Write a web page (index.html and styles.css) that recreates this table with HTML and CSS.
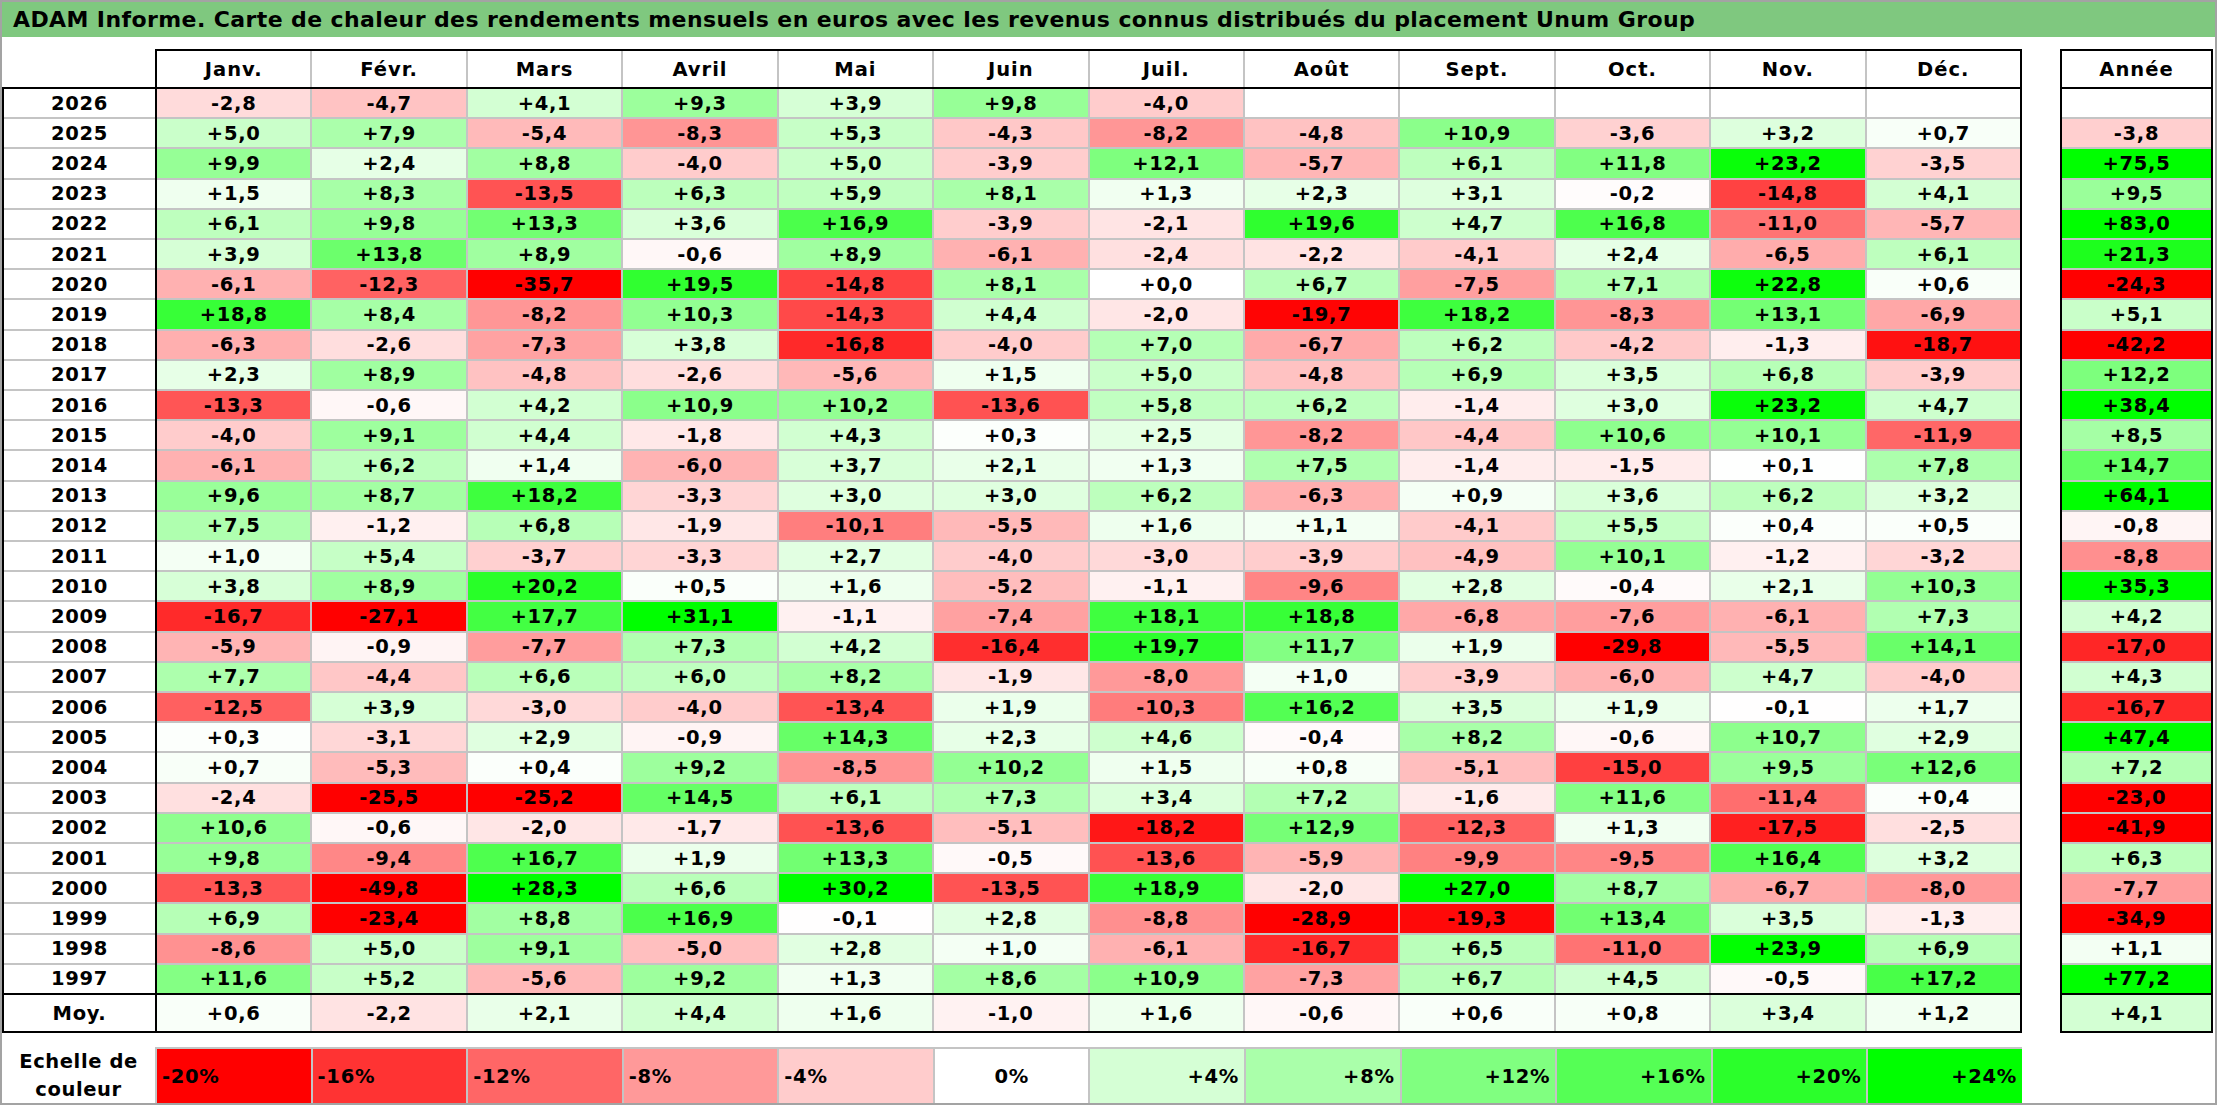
FILE: index.html
```html
<!DOCTYPE html>
<html lang="fr">
<head>
<meta charset="utf-8">
<title>ADAM Informe – Unum Group</title>
<link rel="stylesheet" href="styles.css">
</head>
<body>
<div class="page">
  <div class="title">ADAM Informe. Carte de chaleur des rendements mensuels en euros avec les revenus connus distribués du placement Unum Group</div>
  <div class="main">
    <div class="left">
      <div class="hdr">
        <div class="corner"></div>
        <div class="mhead">
          <div class="h">Janv.</div><div class="h">Févr.</div><div class="h">Mars</div><div class="h">Avril</div><div class="h">Mai</div><div class="h">Juin</div><div class="h">Juil.</div><div class="h">Août</div><div class="h">Sept.</div><div class="h">Oct.</div><div class="h">Nov.</div><div class="h">Déc.</div>
        </div>
      </div>
      <div class="body">
        <div class="years">
          <div class="y">2026</div><div class="y">2025</div><div class="y">2024</div><div class="y">2023</div><div class="y">2022</div><div class="y">2021</div><div class="y">2020</div><div class="y">2019</div><div class="y">2018</div><div class="y">2017</div><div class="y">2016</div><div class="y">2015</div><div class="y">2014</div><div class="y">2013</div><div class="y">2012</div><div class="y">2011</div><div class="y">2010</div><div class="y">2009</div><div class="y">2008</div><div class="y">2007</div><div class="y">2006</div><div class="y">2005</div><div class="y">2004</div><div class="y">2003</div><div class="y">2002</div><div class="y">2001</div><div class="y">2000</div><div class="y">1999</div><div class="y">1998</div><div class="y">1997</div>
        </div>
        <div class="cells">
          <div class="c" style="--v:-2.8">-2,8</div><div class="c" style="--v:-4.7">-4,7</div><div class="c" style="--v:4.1">+4,1</div><div class="c" style="--v:9.3">+9,3</div><div class="c" style="--v:3.9">+3,9</div><div class="c" style="--v:9.8">+9,8</div><div class="c" style="--v:-4.0">-4,0</div><div class="c"></div><div class="c"></div><div class="c"></div><div class="c"></div><div class="c"></div>
          <div class="c" style="--v:5.0">+5,0</div><div class="c" style="--v:7.9">+7,9</div><div class="c" style="--v:-5.4">-5,4</div><div class="c" style="--v:-8.3">-8,3</div><div class="c" style="--v:5.3">+5,3</div><div class="c" style="--v:-4.3">-4,3</div><div class="c" style="--v:-8.2">-8,2</div><div class="c" style="--v:-4.8">-4,8</div><div class="c" style="--v:10.9">+10,9</div><div class="c" style="--v:-3.6">-3,6</div><div class="c" style="--v:3.2">+3,2</div><div class="c" style="--v:0.7">+0,7</div>
          <div class="c" style="--v:9.9">+9,9</div><div class="c" style="--v:2.4">+2,4</div><div class="c" style="--v:8.8">+8,8</div><div class="c" style="--v:-4.0">-4,0</div><div class="c" style="--v:5.0">+5,0</div><div class="c" style="--v:-3.9">-3,9</div><div class="c" style="--v:12.1">+12,1</div><div class="c" style="--v:-5.7">-5,7</div><div class="c" style="--v:6.1">+6,1</div><div class="c" style="--v:11.8">+11,8</div><div class="c" style="--v:23.2">+23,2</div><div class="c" style="--v:-3.5">-3,5</div>
          <div class="c" style="--v:1.5">+1,5</div><div class="c" style="--v:8.3">+8,3</div><div class="c" style="--v:-13.5">-13,5</div><div class="c" style="--v:6.3">+6,3</div><div class="c" style="--v:5.9">+5,9</div><div class="c" style="--v:8.1">+8,1</div><div class="c" style="--v:1.3">+1,3</div><div class="c" style="--v:2.3">+2,3</div><div class="c" style="--v:3.1">+3,1</div><div class="c" style="--v:-0.2">-0,2</div><div class="c" style="--v:-14.8">-14,8</div><div class="c" style="--v:4.1">+4,1</div>
          <div class="c" style="--v:6.1">+6,1</div><div class="c" style="--v:9.8">+9,8</div><div class="c" style="--v:13.3">+13,3</div><div class="c" style="--v:3.6">+3,6</div><div class="c" style="--v:16.9">+16,9</div><div class="c" style="--v:-3.9">-3,9</div><div class="c" style="--v:-2.1">-2,1</div><div class="c" style="--v:19.6">+19,6</div><div class="c" style="--v:4.7">+4,7</div><div class="c" style="--v:16.8">+16,8</div><div class="c" style="--v:-11.0">-11,0</div><div class="c" style="--v:-5.7">-5,7</div>
          <div class="c" style="--v:3.9">+3,9</div><div class="c" style="--v:13.8">+13,8</div><div class="c" style="--v:8.9">+8,9</div><div class="c" style="--v:-0.6">-0,6</div><div class="c" style="--v:8.9">+8,9</div><div class="c" style="--v:-6.1">-6,1</div><div class="c" style="--v:-2.4">-2,4</div><div class="c" style="--v:-2.2">-2,2</div><div class="c" style="--v:-4.1">-4,1</div><div class="c" style="--v:2.4">+2,4</div><div class="c" style="--v:-6.5">-6,5</div><div class="c" style="--v:6.1">+6,1</div>
          <div class="c" style="--v:-6.1">-6,1</div><div class="c" style="--v:-12.3">-12,3</div><div class="c" style="--v:-35.7">-35,7</div><div class="c" style="--v:19.5">+19,5</div><div class="c" style="--v:-14.8">-14,8</div><div class="c" style="--v:8.1">+8,1</div><div class="c" style="--v:0">+0,0</div><div class="c" style="--v:6.7">+6,7</div><div class="c" style="--v:-7.5">-7,5</div><div class="c" style="--v:7.1">+7,1</div><div class="c" style="--v:22.8">+22,8</div><div class="c" style="--v:0.6">+0,6</div>
          <div class="c" style="--v:18.8">+18,8</div><div class="c" style="--v:8.4">+8,4</div><div class="c" style="--v:-8.2">-8,2</div><div class="c" style="--v:10.3">+10,3</div><div class="c" style="--v:-14.3">-14,3</div><div class="c" style="--v:4.4">+4,4</div><div class="c" style="--v:-2.0">-2,0</div><div class="c" style="--v:-19.7">-19,7</div><div class="c" style="--v:18.2">+18,2</div><div class="c" style="--v:-8.3">-8,3</div><div class="c" style="--v:13.1">+13,1</div><div class="c" style="--v:-6.9">-6,9</div>
          <div class="c" style="--v:-6.3">-6,3</div><div class="c" style="--v:-2.6">-2,6</div><div class="c" style="--v:-7.3">-7,3</div><div class="c" style="--v:3.8">+3,8</div><div class="c" style="--v:-16.8">-16,8</div><div class="c" style="--v:-4.0">-4,0</div><div class="c" style="--v:7.0">+7,0</div><div class="c" style="--v:-6.7">-6,7</div><div class="c" style="--v:6.2">+6,2</div><div class="c" style="--v:-4.2">-4,2</div><div class="c" style="--v:-1.3">-1,3</div><div class="c" style="--v:-18.7">-18,7</div>
          <div class="c" style="--v:2.3">+2,3</div><div class="c" style="--v:8.9">+8,9</div><div class="c" style="--v:-4.8">-4,8</div><div class="c" style="--v:-2.6">-2,6</div><div class="c" style="--v:-5.6">-5,6</div><div class="c" style="--v:1.5">+1,5</div><div class="c" style="--v:5.0">+5,0</div><div class="c" style="--v:-4.8">-4,8</div><div class="c" style="--v:6.9">+6,9</div><div class="c" style="--v:3.5">+3,5</div><div class="c" style="--v:6.8">+6,8</div><div class="c" style="--v:-3.9">-3,9</div>
          <div class="c" style="--v:-13.3">-13,3</div><div class="c" style="--v:-0.6">-0,6</div><div class="c" style="--v:4.2">+4,2</div><div class="c" style="--v:10.9">+10,9</div><div class="c" style="--v:10.2">+10,2</div><div class="c" style="--v:-13.6">-13,6</div><div class="c" style="--v:5.8">+5,8</div><div class="c" style="--v:6.2">+6,2</div><div class="c" style="--v:-1.4">-1,4</div><div class="c" style="--v:3.0">+3,0</div><div class="c" style="--v:23.2">+23,2</div><div class="c" style="--v:4.7">+4,7</div>
          <div class="c" style="--v:-4.0">-4,0</div><div class="c" style="--v:9.1">+9,1</div><div class="c" style="--v:4.4">+4,4</div><div class="c" style="--v:-1.8">-1,8</div><div class="c" style="--v:4.3">+4,3</div><div class="c" style="--v:0.3">+0,3</div><div class="c" style="--v:2.5">+2,5</div><div class="c" style="--v:-8.2">-8,2</div><div class="c" style="--v:-4.4">-4,4</div><div class="c" style="--v:10.6">+10,6</div><div class="c" style="--v:10.1">+10,1</div><div class="c" style="--v:-11.9">-11,9</div>
          <div class="c" style="--v:-6.1">-6,1</div><div class="c" style="--v:6.2">+6,2</div><div class="c" style="--v:1.4">+1,4</div><div class="c" style="--v:-6.0">-6,0</div><div class="c" style="--v:3.7">+3,7</div><div class="c" style="--v:2.1">+2,1</div><div class="c" style="--v:1.3">+1,3</div><div class="c" style="--v:7.5">+7,5</div><div class="c" style="--v:-1.4">-1,4</div><div class="c" style="--v:-1.5">-1,5</div><div class="c" style="--v:0.1">+0,1</div><div class="c" style="--v:7.8">+7,8</div>
          <div class="c" style="--v:9.6">+9,6</div><div class="c" style="--v:8.7">+8,7</div><div class="c" style="--v:18.2">+18,2</div><div class="c" style="--v:-3.3">-3,3</div><div class="c" style="--v:3.0">+3,0</div><div class="c" style="--v:3.0">+3,0</div><div class="c" style="--v:6.2">+6,2</div><div class="c" style="--v:-6.3">-6,3</div><div class="c" style="--v:0.9">+0,9</div><div class="c" style="--v:3.6">+3,6</div><div class="c" style="--v:6.2">+6,2</div><div class="c" style="--v:3.2">+3,2</div>
          <div class="c" style="--v:7.5">+7,5</div><div class="c" style="--v:-1.2">-1,2</div><div class="c" style="--v:6.8">+6,8</div><div class="c" style="--v:-1.9">-1,9</div><div class="c" style="--v:-10.1">-10,1</div><div class="c" style="--v:-5.5">-5,5</div><div class="c" style="--v:1.6">+1,6</div><div class="c" style="--v:1.1">+1,1</div><div class="c" style="--v:-4.1">-4,1</div><div class="c" style="--v:5.5">+5,5</div><div class="c" style="--v:0.4">+0,4</div><div class="c" style="--v:0.5">+0,5</div>
          <div class="c" style="--v:1.0">+1,0</div><div class="c" style="--v:5.4">+5,4</div><div class="c" style="--v:-3.7">-3,7</div><div class="c" style="--v:-3.3">-3,3</div><div class="c" style="--v:2.7">+2,7</div><div class="c" style="--v:-4.0">-4,0</div><div class="c" style="--v:-3.0">-3,0</div><div class="c" style="--v:-3.9">-3,9</div><div class="c" style="--v:-4.9">-4,9</div><div class="c" style="--v:10.1">+10,1</div><div class="c" style="--v:-1.2">-1,2</div><div class="c" style="--v:-3.2">-3,2</div>
          <div class="c" style="--v:3.8">+3,8</div><div class="c" style="--v:8.9">+8,9</div><div class="c" style="--v:20.2">+20,2</div><div class="c" style="--v:0.5">+0,5</div><div class="c" style="--v:1.6">+1,6</div><div class="c" style="--v:-5.2">-5,2</div><div class="c" style="--v:-1.1">-1,1</div><div class="c" style="--v:-9.6">-9,6</div><div class="c" style="--v:2.8">+2,8</div><div class="c" style="--v:-0.4">-0,4</div><div class="c" style="--v:2.1">+2,1</div><div class="c" style="--v:10.3">+10,3</div>
          <div class="c" style="--v:-16.7">-16,7</div><div class="c" style="--v:-27.1">-27,1</div><div class="c" style="--v:17.7">+17,7</div><div class="c" style="--v:31.1">+31,1</div><div class="c" style="--v:-1.1">-1,1</div><div class="c" style="--v:-7.4">-7,4</div><div class="c" style="--v:18.1">+18,1</div><div class="c" style="--v:18.8">+18,8</div><div class="c" style="--v:-6.8">-6,8</div><div class="c" style="--v:-7.6">-7,6</div><div class="c" style="--v:-6.1">-6,1</div><div class="c" style="--v:7.3">+7,3</div>
          <div class="c" style="--v:-5.9">-5,9</div><div class="c" style="--v:-0.9">-0,9</div><div class="c" style="--v:-7.7">-7,7</div><div class="c" style="--v:7.3">+7,3</div><div class="c" style="--v:4.2">+4,2</div><div class="c" style="--v:-16.4">-16,4</div><div class="c" style="--v:19.7">+19,7</div><div class="c" style="--v:11.7">+11,7</div><div class="c" style="--v:1.9">+1,9</div><div class="c" style="--v:-29.8">-29,8</div><div class="c" style="--v:-5.5">-5,5</div><div class="c" style="--v:14.1">+14,1</div>
          <div class="c" style="--v:7.7">+7,7</div><div class="c" style="--v:-4.4">-4,4</div><div class="c" style="--v:6.6">+6,6</div><div class="c" style="--v:6.0">+6,0</div><div class="c" style="--v:8.2">+8,2</div><div class="c" style="--v:-1.9">-1,9</div><div class="c" style="--v:-8.0">-8,0</div><div class="c" style="--v:1.0">+1,0</div><div class="c" style="--v:-3.9">-3,9</div><div class="c" style="--v:-6.0">-6,0</div><div class="c" style="--v:4.7">+4,7</div><div class="c" style="--v:-4.0">-4,0</div>
          <div class="c" style="--v:-12.5">-12,5</div><div class="c" style="--v:3.9">+3,9</div><div class="c" style="--v:-3.0">-3,0</div><div class="c" style="--v:-4.0">-4,0</div><div class="c" style="--v:-13.4">-13,4</div><div class="c" style="--v:1.9">+1,9</div><div class="c" style="--v:-10.3">-10,3</div><div class="c" style="--v:16.2">+16,2</div><div class="c" style="--v:3.5">+3,5</div><div class="c" style="--v:1.9">+1,9</div><div class="c" style="--v:-0.1">-0,1</div><div class="c" style="--v:1.7">+1,7</div>
          <div class="c" style="--v:0.3">+0,3</div><div class="c" style="--v:-3.1">-3,1</div><div class="c" style="--v:2.9">+2,9</div><div class="c" style="--v:-0.9">-0,9</div><div class="c" style="--v:14.3">+14,3</div><div class="c" style="--v:2.3">+2,3</div><div class="c" style="--v:4.6">+4,6</div><div class="c" style="--v:-0.4">-0,4</div><div class="c" style="--v:8.2">+8,2</div><div class="c" style="--v:-0.6">-0,6</div><div class="c" style="--v:10.7">+10,7</div><div class="c" style="--v:2.9">+2,9</div>
          <div class="c" style="--v:0.7">+0,7</div><div class="c" style="--v:-5.3">-5,3</div><div class="c" style="--v:0.4">+0,4</div><div class="c" style="--v:9.2">+9,2</div><div class="c" style="--v:-8.5">-8,5</div><div class="c" style="--v:10.2">+10,2</div><div class="c" style="--v:1.5">+1,5</div><div class="c" style="--v:0.8">+0,8</div><div class="c" style="--v:-5.1">-5,1</div><div class="c" style="--v:-15.0">-15,0</div><div class="c" style="--v:9.5">+9,5</div><div class="c" style="--v:12.6">+12,6</div>
          <div class="c" style="--v:-2.4">-2,4</div><div class="c" style="--v:-25.5">-25,5</div><div class="c" style="--v:-25.2">-25,2</div><div class="c" style="--v:14.5">+14,5</div><div class="c" style="--v:6.1">+6,1</div><div class="c" style="--v:7.3">+7,3</div><div class="c" style="--v:3.4">+3,4</div><div class="c" style="--v:7.2">+7,2</div><div class="c" style="--v:-1.6">-1,6</div><div class="c" style="--v:11.6">+11,6</div><div class="c" style="--v:-11.4">-11,4</div><div class="c" style="--v:0.4">+0,4</div>
          <div class="c" style="--v:10.6">+10,6</div><div class="c" style="--v:-0.6">-0,6</div><div class="c" style="--v:-2.0">-2,0</div><div class="c" style="--v:-1.7">-1,7</div><div class="c" style="--v:-13.6">-13,6</div><div class="c" style="--v:-5.1">-5,1</div><div class="c" style="--v:-18.2">-18,2</div><div class="c" style="--v:12.9">+12,9</div><div class="c" style="--v:-12.3">-12,3</div><div class="c" style="--v:1.3">+1,3</div><div class="c" style="--v:-17.5">-17,5</div><div class="c" style="--v:-2.5">-2,5</div>
          <div class="c" style="--v:9.8">+9,8</div><div class="c" style="--v:-9.4">-9,4</div><div class="c" style="--v:16.7">+16,7</div><div class="c" style="--v:1.9">+1,9</div><div class="c" style="--v:13.3">+13,3</div><div class="c" style="--v:-0.5">-0,5</div><div class="c" style="--v:-13.6">-13,6</div><div class="c" style="--v:-5.9">-5,9</div><div class="c" style="--v:-9.9">-9,9</div><div class="c" style="--v:-9.5">-9,5</div><div class="c" style="--v:16.4">+16,4</div><div class="c" style="--v:3.2">+3,2</div>
          <div class="c" style="--v:-13.3">-13,3</div><div class="c" style="--v:-49.8">-49,8</div><div class="c" style="--v:28.3">+28,3</div><div class="c" style="--v:6.6">+6,6</div><div class="c" style="--v:30.2">+30,2</div><div class="c" style="--v:-13.5">-13,5</div><div class="c" style="--v:18.9">+18,9</div><div class="c" style="--v:-2.0">-2,0</div><div class="c" style="--v:27.0">+27,0</div><div class="c" style="--v:8.7">+8,7</div><div class="c" style="--v:-6.7">-6,7</div><div class="c" style="--v:-8.0">-8,0</div>
          <div class="c" style="--v:6.9">+6,9</div><div class="c" style="--v:-23.4">-23,4</div><div class="c" style="--v:8.8">+8,8</div><div class="c" style="--v:16.9">+16,9</div><div class="c" style="--v:-0.1">-0,1</div><div class="c" style="--v:2.8">+2,8</div><div class="c" style="--v:-8.8">-8,8</div><div class="c" style="--v:-28.9">-28,9</div><div class="c" style="--v:-19.3">-19,3</div><div class="c" style="--v:13.4">+13,4</div><div class="c" style="--v:3.5">+3,5</div><div class="c" style="--v:-1.3">-1,3</div>
          <div class="c" style="--v:-8.6">-8,6</div><div class="c" style="--v:5.0">+5,0</div><div class="c" style="--v:9.1">+9,1</div><div class="c" style="--v:-5.0">-5,0</div><div class="c" style="--v:2.8">+2,8</div><div class="c" style="--v:1.0">+1,0</div><div class="c" style="--v:-6.1">-6,1</div><div class="c" style="--v:-16.7">-16,7</div><div class="c" style="--v:6.5">+6,5</div><div class="c" style="--v:-11.0">-11,0</div><div class="c" style="--v:23.9">+23,9</div><div class="c" style="--v:6.9">+6,9</div>
          <div class="c" style="--v:11.6">+11,6</div><div class="c" style="--v:5.2">+5,2</div><div class="c" style="--v:-5.6">-5,6</div><div class="c" style="--v:9.2">+9,2</div><div class="c" style="--v:1.3">+1,3</div><div class="c" style="--v:8.6">+8,6</div><div class="c" style="--v:10.9">+10,9</div><div class="c" style="--v:-7.3">-7,3</div><div class="c" style="--v:6.7">+6,7</div><div class="c" style="--v:4.5">+4,5</div><div class="c" style="--v:-0.5">-0,5</div><div class="c" style="--v:17.2">+17,2</div>
        </div>
      </div>
      <div class="moy">
        <div class="ylab">Moy.</div>
        <div class="mrow">
          <div class="c" style="--v:0.6">+0,6</div><div class="c" style="--v:-2.2">-2,2</div><div class="c" style="--v:2.1">+2,1</div><div class="c" style="--v:4.4">+4,4</div><div class="c" style="--v:1.6">+1,6</div><div class="c" style="--v:-1.0">-1,0</div><div class="c" style="--v:1.6">+1,6</div><div class="c" style="--v:-0.6">-0,6</div><div class="c" style="--v:0.6">+0,6</div><div class="c" style="--v:0.8">+0,8</div><div class="c" style="--v:3.4">+3,4</div><div class="c" style="--v:1.2">+1,2</div>
        </div>
      </div>
      <div class="scale">
        <div class="slab">Echelle de<br>couleur</div>
        <div class="sc">
          <div class="c s neg" style="--v:-20">-20%</div><div class="c s neg" style="--v:-16">-16%</div><div class="c s neg" style="--v:-12">-12%</div><div class="c s neg" style="--v:-8">-8%</div><div class="c s neg" style="--v:-4">-4%</div><div class="c s" style="--v:0">0%</div><div class="c s pos" style="--v:4">+4%</div><div class="c s pos" style="--v:8">+8%</div><div class="c s pos" style="--v:12">+12%</div><div class="c s pos" style="--v:16">+16%</div><div class="c s pos" style="--v:20">+20%</div><div class="c s pos" style="--v:24">+24%</div>
        </div>
      </div>
    </div>
    <div class="right">
      <div class="ahead">Année</div>
      <div class="abody">
        <div class="c"></div>
        <div class="c" style="--v:-3.8">-3,8</div>
        <div class="c" style="--v:75.5">+75,5</div>
        <div class="c" style="--v:9.5">+9,5</div>
        <div class="c" style="--v:83.0">+83,0</div>
        <div class="c" style="--v:21.3">+21,3</div>
        <div class="c" style="--v:-24.3">-24,3</div>
        <div class="c" style="--v:5.1">+5,1</div>
        <div class="c" style="--v:-42.2">-42,2</div>
        <div class="c" style="--v:12.2">+12,2</div>
        <div class="c" style="--v:38.4">+38,4</div>
        <div class="c" style="--v:8.5">+8,5</div>
        <div class="c" style="--v:14.7">+14,7</div>
        <div class="c" style="--v:64.1">+64,1</div>
        <div class="c" style="--v:-0.8">-0,8</div>
        <div class="c" style="--v:-8.8">-8,8</div>
        <div class="c" style="--v:35.3">+35,3</div>
        <div class="c" style="--v:4.2">+4,2</div>
        <div class="c" style="--v:-17.0">-17,0</div>
        <div class="c" style="--v:4.3">+4,3</div>
        <div class="c" style="--v:-16.7">-16,7</div>
        <div class="c" style="--v:47.4">+47,4</div>
        <div class="c" style="--v:7.2">+7,2</div>
        <div class="c" style="--v:-23.0">-23,0</div>
        <div class="c" style="--v:-41.9">-41,9</div>
        <div class="c" style="--v:6.3">+6,3</div>
        <div class="c" style="--v:-7.7">-7,7</div>
        <div class="c" style="--v:-34.9">-34,9</div>
        <div class="c" style="--v:1.1">+1,1</div>
        <div class="c" style="--v:77.2">+77,2</div>
      </div>
      <div class="amoy c" style="--v:4.1">+4,1</div>
    </div>
  </div>
</div>
</body>
</html>
```

FILE: styles.css
```css
* { box-sizing: border-box; }
html, body { margin: 0; padding: 0; background: #fff; }
body {
  font-family: "DejaVu Sans", "Liberation Sans", sans-serif;
  font-weight: bold;
  color: #000;
  font-size: 19.5px;
}
.page {
  width: 2217px;
  height: 1105px;
  border: 2px solid #a3a3a3;
  display: flex;
  flex-direction: column;
  overflow: hidden;
}
.title {
  height: 35px;
  flex: none;
  background: #7fc87f;
  display: flex;
  align-items: center;
  padding-left: 11px;
  font-size: 22px;
  letter-spacing: 0.4px;
  white-space: nowrap;
}
.main {
  display: flex;
  gap: 38px;
  margin-top: 12px;
}
.left {
  width: 2020px;
  display: flex;
  flex-direction: column;
}
.hdr { display: flex; height: 38px; }
.corner { width: 153px; flex: none; }
.mhead, .cells, .mrow {
  display: grid;
  grid-template-columns: repeat(12, 1fr);
  gap: 2px;
  background: #c4c4c4;
}
.mhead {
  flex: 1;
  border: 2px solid #000;
  border-bottom: 0;
}
.h, .y, .c, .ylab, .ahead {
  display: flex;
  align-items: center;
  justify-content: center;
  letter-spacing: 0.7px;
  background: #fff;
}
.h, .ahead { letter-spacing: 1px; }
.body {
  height: 908px;
  display: flex;
  border: 2px solid #000;
}
.years {
  width: 151px;
  flex: none;
  display: grid;
  grid-template-rows: repeat(30, 1fr);
  row-gap: 2px;
  background: #c4c4c4;
}
.cells {
  flex: 1;
  grid-template-rows: repeat(30, 1fr);
  border-left: 2px solid #000;
}
.moy {
  height: 38px;
  display: flex;
  border: 2px solid #000;
  border-top: 0;
}
.ylab { width: 151px; flex: none; }
.mrow { flex: 1; border-left: 2px solid #000; }

.c {
  --v: 0;
  --r: clamp(0, calc(255 - 10.625 * max(var(--v), 0)), 255);
  --g: clamp(0, calc(255 + 12.75 * min(var(--v), 0)), 255);
  background: rgb(var(--r) var(--g) min(var(--r), var(--g)));
}

.scale {
  display: flex;
  height: 56px;
  margin-top: 14px;
}
.slab {
  width: 153px;
  flex: none;
  display: flex;
  align-items: center;
  justify-content: center;
  text-align: center;
  line-height: 28px;
  letter-spacing: 0.6px;
  padding-top: 2px;
}
.sc {
  flex: 1;
  display: grid;
  grid-template-columns: repeat(12, 1fr);
  gap: 2px;
  background: #c4c4c4;
  border-top: 2px solid #c4c4c4;
  border-left: 2px solid #c4c4c4;
}
.s { padding: 0 5px; }
.s.neg { justify-content: flex-start; }
.s.pos { justify-content: flex-end; }

.right {
  width: 153px;
  flex: none;
  display: flex;
  flex-direction: column;
}
.ahead {
  height: 38px;
  border: 2px solid #000;
  border-bottom: 0;
}
.abody {
  height: 908px;
  border: 2px solid #000;
  display: grid;
  grid-template-rows: repeat(30, 1fr);
  row-gap: 2px;
  background: #c4c4c4;
}
.amoy {
  height: 38px;
  border: 2px solid #000;
  border-top: 0;
}
```
